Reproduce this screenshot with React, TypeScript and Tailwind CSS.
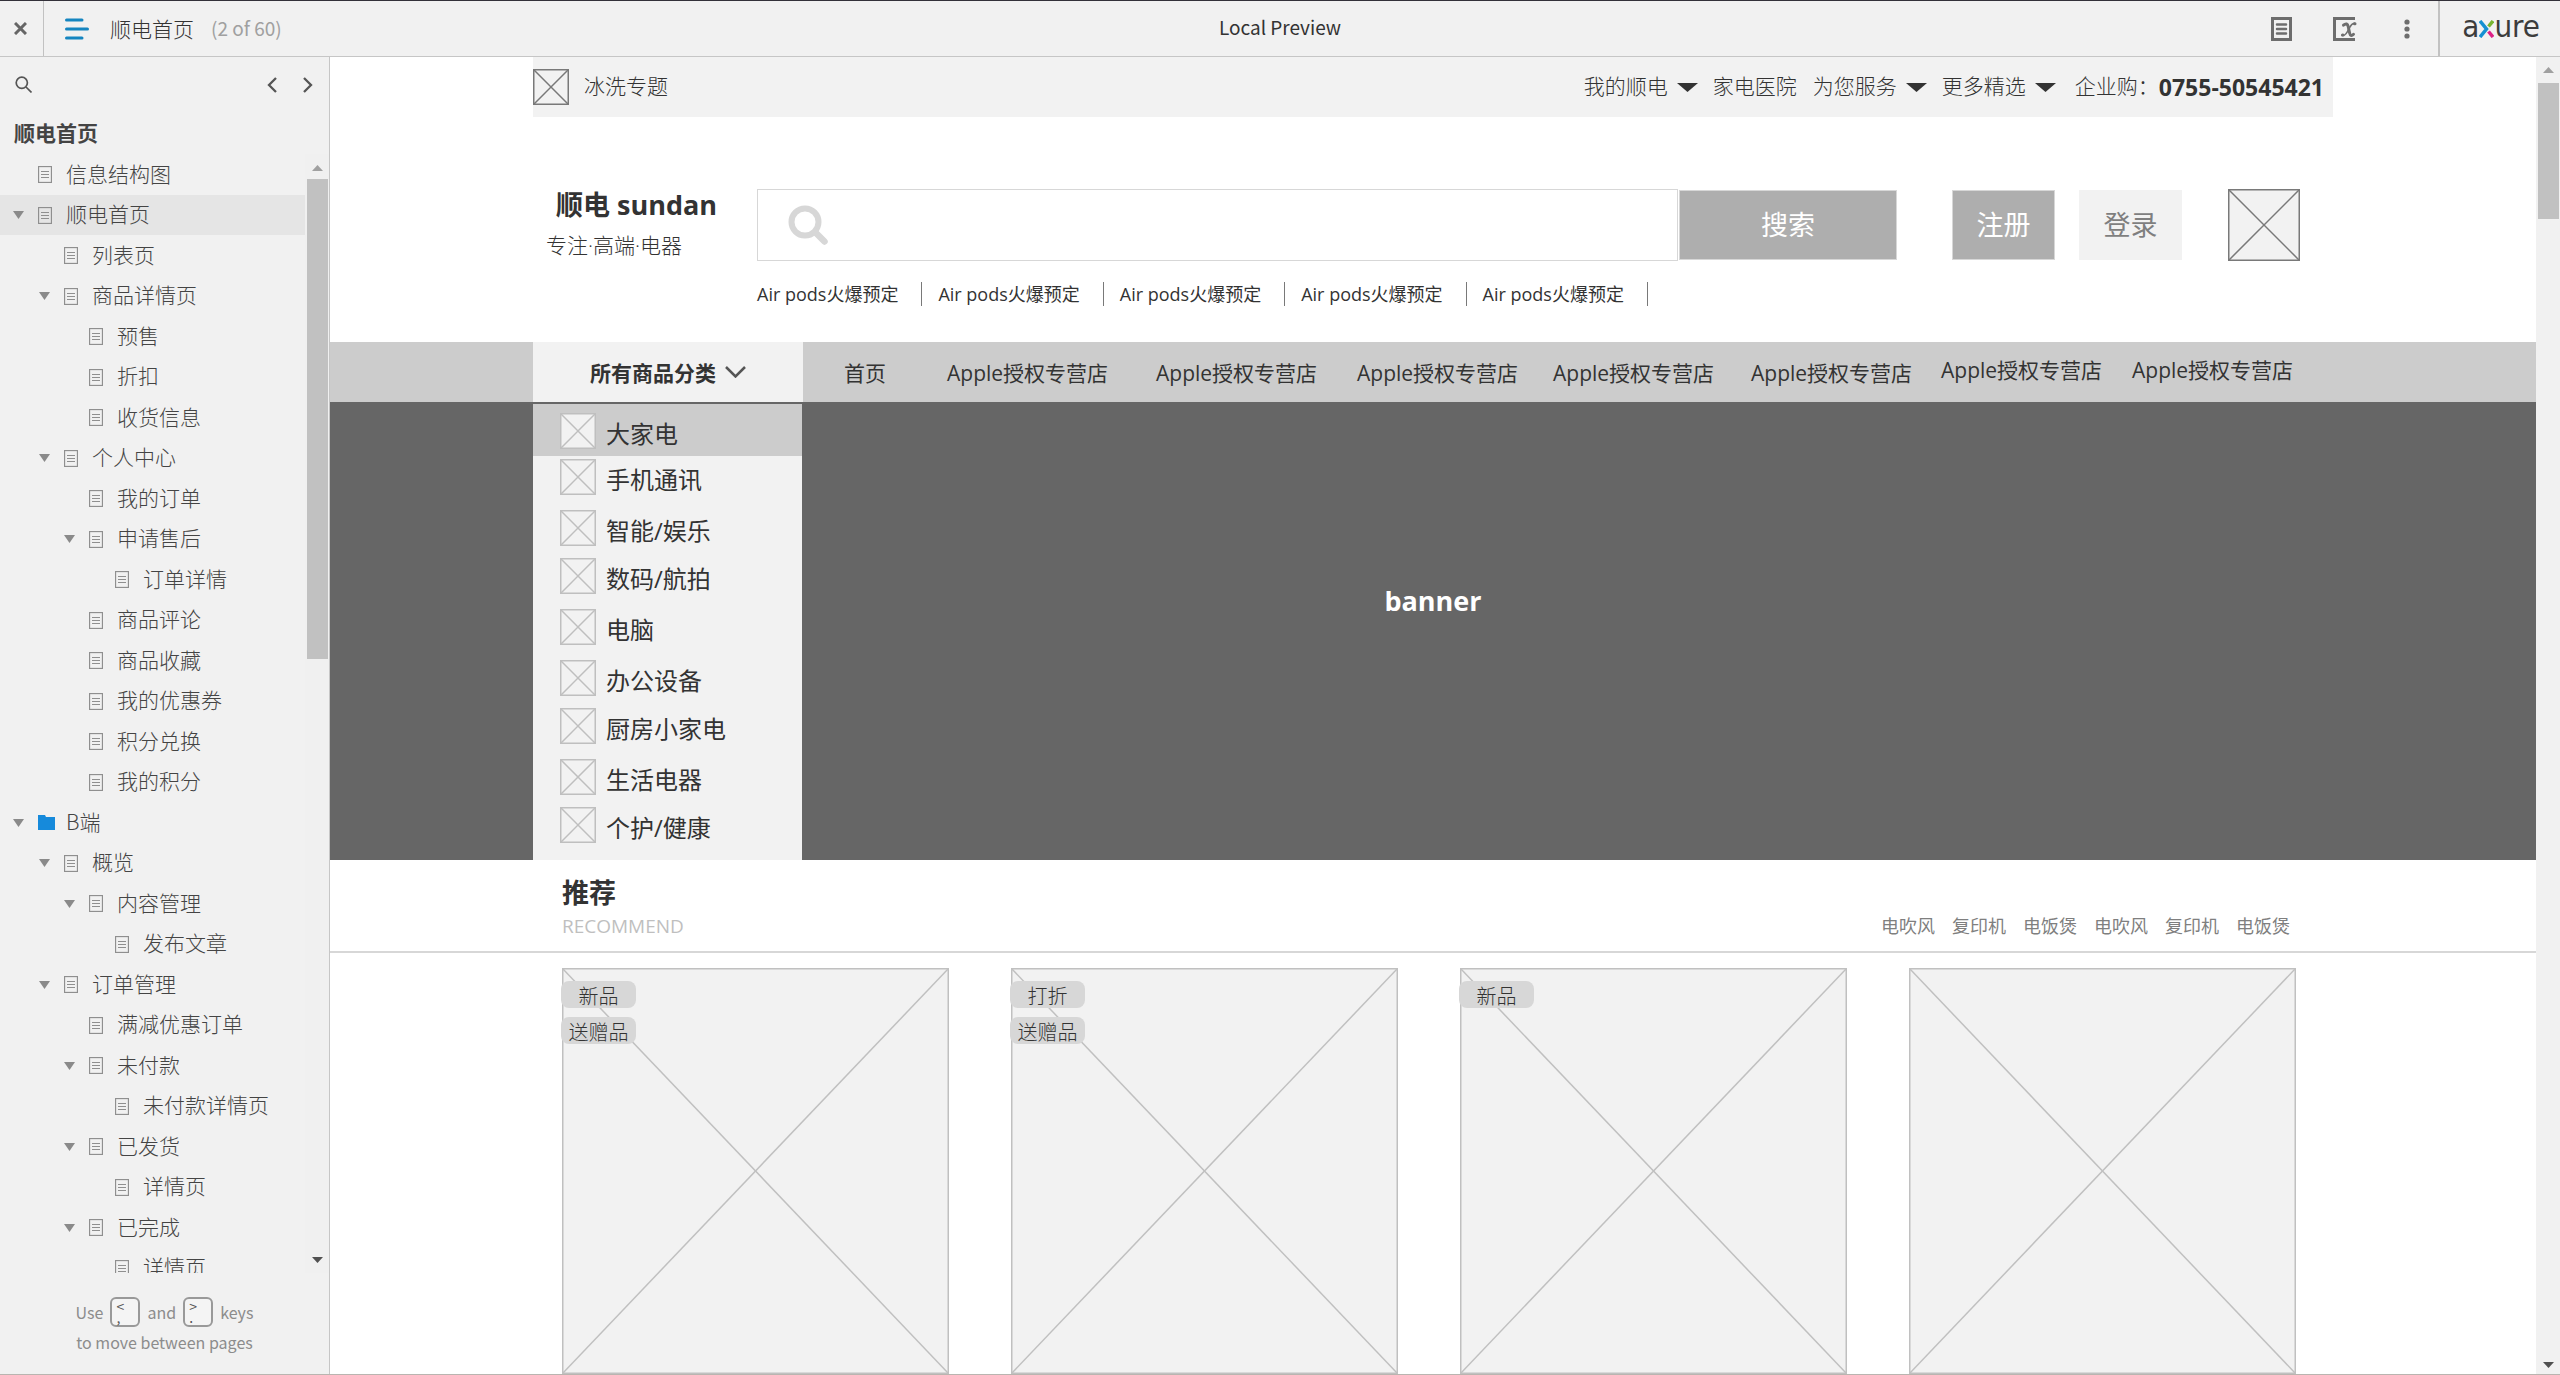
import React from "react";

type TreeItem = { label: string; level: 0 | 1 | 2 | 3; open?: boolean; folder?: boolean; selected?: boolean };

const TREE: TreeItem[] = [
  { label: "信息结构图", level: 0 },
  { label: "顺电首页", level: 0, open: true, selected: true },
  { label: "列表页", level: 1 },
  { label: "商品详情页", level: 1, open: true },
  { label: "预售", level: 2 },
  { label: "折扣", level: 2 },
  { label: "收货信息", level: 2 },
  { label: "个人中心", level: 1, open: true },
  { label: "我的订单", level: 2 },
  { label: "申请售后", level: 2, open: true },
  { label: "订单详情", level: 3 },
  { label: "商品评论", level: 2 },
  { label: "商品收藏", level: 2 },
  { label: "我的优惠券", level: 2 },
  { label: "积分兑换", level: 2 },
  { label: "我的积分", level: 2 },
  { label: "B端", level: 0, open: true, folder: true },
  { label: "概览", level: 1, open: true },
  { label: "内容管理", level: 2, open: true },
  { label: "发布文章", level: 3 },
  { label: "订单管理", level: 1, open: true },
  { label: "满减优惠订单", level: 2 },
  { label: "未付款", level: 2, open: true },
  { label: "未付款详情页", level: 3 },
  { label: "已发货", level: 2, open: true },
  { label: "详情页", level: 3 },
  { label: "已完成", level: 2, open: true },
  { label: "详情页", level: 3 },
];

const INDENT = ["pl-[13px]", "pl-[39px]", "pl-[64px]", "pl-[90px]"];

const CATEGORIES = [
  { label: "手机通讯", height: "h-[51px]" },
  { label: "智能/娱乐", height: "h-12" },
  { label: "数码/航拍", height: "h-[51px]" },
  { label: "电脑", height: "h-[51px]" },
  { label: "办公设备", height: "h-12" },
  { label: "厨房小家电", height: "h-[51px]" },
  { label: "生活电器", height: "h-12" },
  { label: "个护/健康", height: "h-[51px]" },
];

const HOT = ["Air pods火爆预定", "Air pods火爆预定", "Air pods火爆预定", "Air pods火爆预定", "Air pods火爆预定"];
const TAGS = ["电吹风", "复印机", "电饭煲", "电吹风", "复印机", "电饭煲"];
const PRODUCTS: string[][] = [["新品", "送赠品"], ["打折", "送赠品"], ["新品"], []];

function Triangle({ className, up }: { className: string; up?: boolean }) {
  return (
    <svg className={className} viewBox="0 0 10 6" preserveAspectRatio="none" fill="currentColor" aria-hidden="true">
      <path d={up ? "M0 6L5 0L10 6Z" : "M0 0H10L5 6Z"} />
    </svg>
  );
}

function Placeholder({ className }: { className: string }) {
  return (
    <svg className={className} aria-hidden="true">
      <rect width="100%" height="100%" fill="#f2f2f2" />
      <g stroke="currentColor" strokeWidth="1.5">
        <line x1="0" y1="0" x2="100%" y2="100%" />
        <line x1="100%" y1="0" x2="0" y2="100%" />
      </g>
      <rect width="100%" height="100%" fill="none" stroke="currentColor" strokeWidth="3" />
    </svg>
  );
}

function PageIcon() {
  return (
    <svg width="14" height="17" viewBox="0 0 14 17" fill="none" stroke="#8f8f8f" aria-hidden="true">
      <rect x="0.5" y="0.5" width="13" height="16" strokeWidth="1.300" />
      <path d="M3 5.5h8M3 8.5h8M3 11.5h8" />
    </svg>
  );
}

function FolderIcon() {
  return (
    <svg width="17" height="15" viewBox="0 0 17 15" fill="#168adb" aria-hidden="true">
      <path d="M0 0h7l1 2h9v13H0z" />
    </svg>
  );
}

function TopBar() {
  return (
    <header className="grid h-[57px] shrink-0 grid-cols-[1fr_auto_1fr] border-t border-t-[#33313a] border-b border-b-[#c6c6c6] bg-[#f1f1f1] text-[19px]">
      <div className="flex items-center">
        <button aria-label="Close" className="flex h-full w-11 items-center border-r border-[#c2c2c2] pl-3.5 text-[#666]">
          <svg width="13" height="13" viewBox="0 0 13 13" stroke="currentColor" strokeWidth="3" aria-hidden="true">
            <path d="M1 1l11 11M12 1L1 12" />
          </svg>
        </button>
        <button aria-label="Pages" className="ml-[21px]">
          <svg width="24" height="22" viewBox="0 0 24 22" stroke="#1585c0" strokeWidth="3" strokeLinecap="round" aria-hidden="true">
            <path d="M1.5 2H17M1.5 11H22.5M1.5 20H17" />
          </svg>
        </button>
        <span className="ml-[21px] text-[21px] font-light text-[#333]">顺电首页</span>
        <span className="ml-[17px] text-[#a0a0a0]">(2 of 60)</span>
      </div>
      <h1 className="flex items-center pb-0.5 text-[#333]">Local Preview</h1>
      <div className="flex items-center justify-end text-[#6d6d6d]">
        <button aria-label="Notes">
          <svg width="21" height="24" viewBox="0 0 21 24" fill="none" stroke="currentColor" aria-hidden="true">
            <rect x="1.5" y="1.5" width="18" height="21" strokeWidth="3" />
            <path d="M6 7.5h9M6 12h9M6 16.5h9" strokeWidth="2.5" strokeLinecap="round" />
          </svg>
        </button>
        <button aria-label="Variables" className="ml-[41px]">
          <svg width="24" height="24" viewBox="0 0 24 24" fill="none" stroke="currentColor" strokeLinecap="round" aria-hidden="true">
            <path d="M20.5 3V1.5h-19v21h19V21" strokeWidth="3" strokeLinecap="butt" />
            <path d="M10.5 8.2C13 6 14.6 6.800 15.200 9.500L16.600 16C17.200 18.600 18.500 19.300 20.500 17.300" strokeWidth="3" />
            <path d="M22 6.500C19.500 5.500 17.800 8 15.800 12C13.800 16.500 12 19.500 9 18.300" strokeWidth="1.600" />
            <path d="M21.500 6.800h.5M9.500 18h.5" strokeWidth="3" />
          </svg>
        </button>
        <button aria-label="More" className="ml-[47px]">
          <svg width="6" height="20" viewBox="0 0 6 20" fill="currentColor" aria-hidden="true">
            <circle cx="3" cy="3" r="2.600" />
            <circle cx="3" cy="10" r="2.600" />
            <circle cx="3" cy="17" r="2.600" />
          </svg>
        </button>
        <a
          href="#axure"
          aria-label="axure"
          className="ml-7 flex h-full items-center border-l-2 border-[#c2c2c2] pr-5 pl-[22px] font-['Liberation_Sans_Narrow','DejaVu_Sans_Condensed',sans-serif] text-[31px] leading-none text-[#3c3c3c]"
        >
          <span className="pb-1">a</span>
          <svg width="15" height="18" viewBox="0 0 15 18" fill="none" strokeWidth="3.500" aria-hidden="true">
            <path d="M1 1l6.500 8L1 17" stroke="#1490d2" />
            <path d="M14 1l-4.500 5.500" stroke="#78b530" />
            <path d="M9.500 11.500L14 17" stroke="#de2286" />
          </svg>
          <span className="pb-1">ure</span>
        </a>
      </div>
    </header>
  );
}

function Key({ top, bottom }: { top: string; bottom: string }) {
  return (
    <kbd className="flex h-[30px] w-[30px] flex-col rounded-md border-2 border-[#999] bg-[#f4f4f4] pl-1 font-[inherit] text-sm leading-[11px] text-[#555]">
      <span className="pt-0.5">{top}</span>
      <span>{bottom}</span>
    </kbd>
  );
}

function Sidebar() {
  return (
    <aside className="flex w-[330px] shrink-0 flex-col border-r border-[#c6c6c6] bg-[#f1f1f1] text-[21px] text-[#444]">
      <div className="flex h-[55px] shrink-0 items-center pr-4 pl-[15px] text-[#555]">
        <button aria-label="Search">
          <svg width="17" height="17" viewBox="0 0 17 17" fill="none" stroke="currentColor" strokeWidth="1.700" aria-hidden="true">
            <circle cx="6.800" cy="6.800" r="5.600" />
            <path d="M11 11l5.500 5.500" />
          </svg>
        </button>
        <button aria-label="Previous page" className="ml-auto">
          <svg width="10" height="16" viewBox="0 0 10 16" fill="none" stroke="currentColor" strokeWidth="2.300" aria-hidden="true">
            <path d="M9 1L2 8l7 7" />
          </svg>
        </button>
        <button aria-label="Next page" className="ml-[26px]">
          <svg width="10" height="16" viewBox="0 0 10 16" fill="none" stroke="currentColor" strokeWidth="2.300" aria-hidden="true">
            <path d="M1 1l7 7-7 7" />
          </svg>
        </button>
      </div>
      <h2 className="flex h-[42px] shrink-0 items-center pl-[14px] font-bold">顺电首页</h2>
      <div className="flex min-h-0 flex-1">
        <ul className="min-w-0 flex-1 overflow-hidden font-light">
          {TREE.map((item, i) => (
            <li key={i} className="odd:h-[41px] even:h-10">
              <a
                href={"#page-" + i}
                className={"flex h-full items-center " + INDENT[item.level] + (item.selected ? " bg-[#e5e5e5]" : "")}
              >
                <span className="mr-3.5 w-[11px] shrink-0 text-[#8a8a8a]">
                  {item.open && <Triangle className="h-[8px] w-[11px]" />}
                </span>
                <span className="w-7 shrink-0">{item.folder ? <FolderIcon /> : <PageIcon />}</span>
                <span className="pb-0.5 whitespace-nowrap">{item.label}</span>
              </a>
            </li>
          ))}
        </ul>
        <div className="flex w-6 shrink-0 flex-col items-center bg-[#f0f0f0] pt-[11px] pb-2.5" aria-hidden="true">
          <Triangle up className="h-[6px] w-[11px] text-[#a0a0a0]" />
          <div className="mt-2 h-[480px] w-[21px] bg-[#c1c1c1]" />
          <Triangle className="mt-auto h-[6px] w-[11px] text-[#505050]" />
        </div>
      </div>
      <div className="flex h-[101px] shrink-0 flex-col items-center pt-6 text-base leading-[30px] text-[#8c8c8c]">
        <p className="flex items-center gap-[7px]">
          Use <Key top="<" bottom="," /> and <Key top=">" bottom="." /> keys
        </p>
        <p>to move between pages</p>
      </div>
    </aside>
  );
}

function UtilityBar() {
  return (
    <div className="mx-auto flex h-[60px] w-full max-w-[1800px] items-center bg-[#f2f2f2] pr-[9px] text-[21px] font-light whitespace-nowrap">
      <Placeholder className="h-9 w-9 text-[#797979]" />
      <a href="#topic" className="ml-[15px]">冰洗专题</a>
      <nav className="ml-auto flex items-center">
        <button className="flex items-center gap-[9px]">
          我的顺电 <Triangle className="h-[9px] w-[21px]" />
        </button>
        <a href="#hospital" className="ml-[15px]">家电医院</a>
        <button className="ml-4 flex items-center gap-[9px]">
          为您服务 <Triangle className="h-[9px] w-[21px]" />
        </button>
        <button className="ml-[15px] flex items-center gap-[9px]">
          更多精选 <Triangle className="h-[9px] w-[21px]" />
        </button>
        <span className="ml-[19px]">企业购：</span>
        <strong className="text-[23px] font-bold">0755-50545421</strong>
      </nav>
    </div>
  );
}

function SearchHeader() {
  return (
    <div className="mx-auto flex h-[225px] w-full max-w-[1800px] items-start pt-[72px] whitespace-nowrap">
      <div className="w-[224px] shrink-0">
        <h2 className="pl-[23px] text-[27px] leading-8 font-bold">顺电 sundan</h2>
        <p className="pt-2 pl-[13px] text-[21px] leading-8 font-light">专注·高端·电器</p>
      </div>
      <div className="min-w-0 flex-1">
        <form className="flex items-center gap-px">
          <label className="flex h-[72px] min-w-0 flex-1 items-center border border-[#d7d7d7] bg-white pl-[30px]">
            <svg width="40" height="40" viewBox="0 0 40 40" fill="none" stroke="#d7d7d7" aria-hidden="true">
              <circle cx="17" cy="17" r="13.500" strokeWidth="6" />
              <path d="M27 27l9.500 9.500" strokeWidth="6.500" strokeLinecap="round" />
            </svg>
            <input type="search" aria-label="搜索商品" className="h-full min-w-0 flex-1 px-4 text-[21px] outline-none" />
          </label>
          <button type="button" className="h-[70px] w-[218px] border border-[#d7d7d7] bg-[#aeaeae] text-[27px] text-white">
            搜索
          </button>
        </form>
        <ul className="flex gap-4 pt-[21px] text-lg">
          {HOT.map((label, i) => (
            <li key={i} className="flex h-6 items-center border-r border-[#797979] pr-[23px]">
              <a href={"#hot-" + i}>{label}</a>
            </li>
          ))}
        </ul>
      </div>
      <div className="mr-[33px] ml-[55px] flex h-[72px] items-center text-[27px]">
        <button className="h-[70px] w-[103px] border border-[#d7d7d7] bg-[#aeaeae] text-white">注册</button>
        <button className="ml-6 h-[70px] w-[103px] bg-[#f2f2f2] text-[#7f7f7f]">登录</button>
        <Placeholder className="ml-[46px] h-[72px] w-[72px] text-[#797979]" />
      </div>
    </div>
  );
}

function NavBar() {
  return (
    <div className="bg-[#ccc]">
      <div className="mx-auto flex h-[60px] w-full max-w-[1800px] text-[21px] whitespace-nowrap">
        <button className="flex w-[270px] shrink-0 items-center bg-[#f2f2f2] pt-1 pl-[57px] font-bold">
          所有商品分类
          <svg width="21" height="12" viewBox="0 0 21 12" fill="none" stroke="#555" strokeWidth="2.500" className="mb-1 ml-[9px]" aria-hidden="true">
            <path d="M1 1l9.500 9.500L20 1" />
          </svg>
        </button>
        <nav className="grid grid-cols-[103px_209px_201px_196px_198px_190px_191px_auto] items-center pt-1 pl-[41px]">
          <a href="#home">首页</a>
          <a href="#s1">Apple授权专营店</a>
          <a href="#s2">Apple授权专营店</a>
          <a href="#s3">Apple授权专营店</a>
          <a href="#s4">Apple授权专营店</a>
          <a href="#s5">Apple授权专营店</a>
          <a href="#s6" className="pb-1.5">Apple授权专营店</a>
          <a href="#s7" className="pb-1.5">Apple授权专营店</a>
        </nav>
      </div>
    </div>
  );
}

function Hero() {
  return (
    <section className="relative bg-[#666]">
      <div className="mx-auto w-full max-w-[1800px] pt-0.5">
        <ul className="h-[456px] w-[269px] bg-[#f2f2f2] text-2xl">
          <li className="mb-[3px] bg-[#ccc]">
            <a href="#c0" className="flex h-[52px] items-start pt-[9px] pl-[27px]">
              <Placeholder className="h-9 w-9 text-[#bfbfbf]" />
              <span className="pt-[3px] pl-2.5 leading-9">大家电</span>
            </a>
          </li>
          {CATEGORIES.map((c) => (
            <li key={c.label} className={c.height}>
              <a href={"#" + c.label} className="flex items-start pl-[27px]">
                <Placeholder className="h-9 w-9 text-[#bfbfbf]" />
                <span className="pt-[3px] pl-2.5 leading-9">{c.label}</span>
              </a>
            </li>
          ))}
        </ul>
      </div>
      <p className="pointer-events-none absolute inset-0 flex items-center justify-center pb-[60px] text-[27px] font-bold text-white">
        banner
      </p>
    </section>
  );
}

function Recommend() {
  return (
    <section>
      <div className="border-b-2 border-[#d7d7d7]">
        <div className="mx-auto flex h-[91px] w-full max-w-[1800px] items-end pr-[43px] pb-3 pl-[29px]">
          <div>
            <h2 className="text-[27px] leading-10 font-bold">推荐</h2>
            <p className="text-[19px] leading-[26px] text-[#bfbfbf]">RECOMMEND</p>
          </div>
          <ul className="ml-auto flex gap-[17px] text-lg leading-[26px] text-[#7f7f7f]">
            {TAGS.map((t, i) => (
              <li key={i}>
                <a href={"#tag-" + i}>{t}</a>
              </li>
            ))}
          </ul>
        </div>
      </div>
      <div className="mx-auto grid w-full max-w-[1800px] grid-cols-4 gap-[62px] pt-[15px] pr-[37px] pl-[29px]">
        {PRODUCTS.map((badges, i) => (
          <a key={i} href={"#product-" + i} className="relative block">
            <Placeholder className="h-[406px] w-full text-[#c0c0c0]" />
            <span className="absolute top-[13px] -left-px flex flex-col gap-[9px]">
              {badges.map((b) => (
                <span key={b} className="flex h-[27px] w-[75px] items-center justify-center rounded-lg bg-[#d7d7d7] pt-1 text-xl font-light">
                  {b}
                </span>
              ))}
            </span>
          </a>
        ))}
      </div>
    </section>
  );
}

export default function App() {
  return (
    <div className="flex h-screen flex-col overflow-hidden border-b border-[#b9b5b0] bg-white font-['Noto_Sans_CJK_SC',sans-serif]">
      <TopBar />
      <div className="flex min-h-0 flex-1">
        <Sidebar />
        <main className="min-w-0 flex-1 overflow-hidden font-['Open_Sans','Noto_Sans_CJK_SC',sans-serif] text-[#333]">
          <UtilityBar />
          <SearchHeader />
          <NavBar />
          <Hero />
          <Recommend />
        </main>
        <div className="flex w-6 shrink-0 flex-col items-center bg-[#f1f1f1] pt-2.5 pb-1.5" aria-hidden="true">
          <Triangle up className="h-[6px] w-[11px] text-[#a0a0a0]" />
          <div className="mt-2.5 h-[136px] w-[21px] bg-[#c1c1c1]" />
          <Triangle className="mt-auto h-[6px] w-[11px] text-[#505050]" />
        </div>
      </div>
    </div>
  );
}
